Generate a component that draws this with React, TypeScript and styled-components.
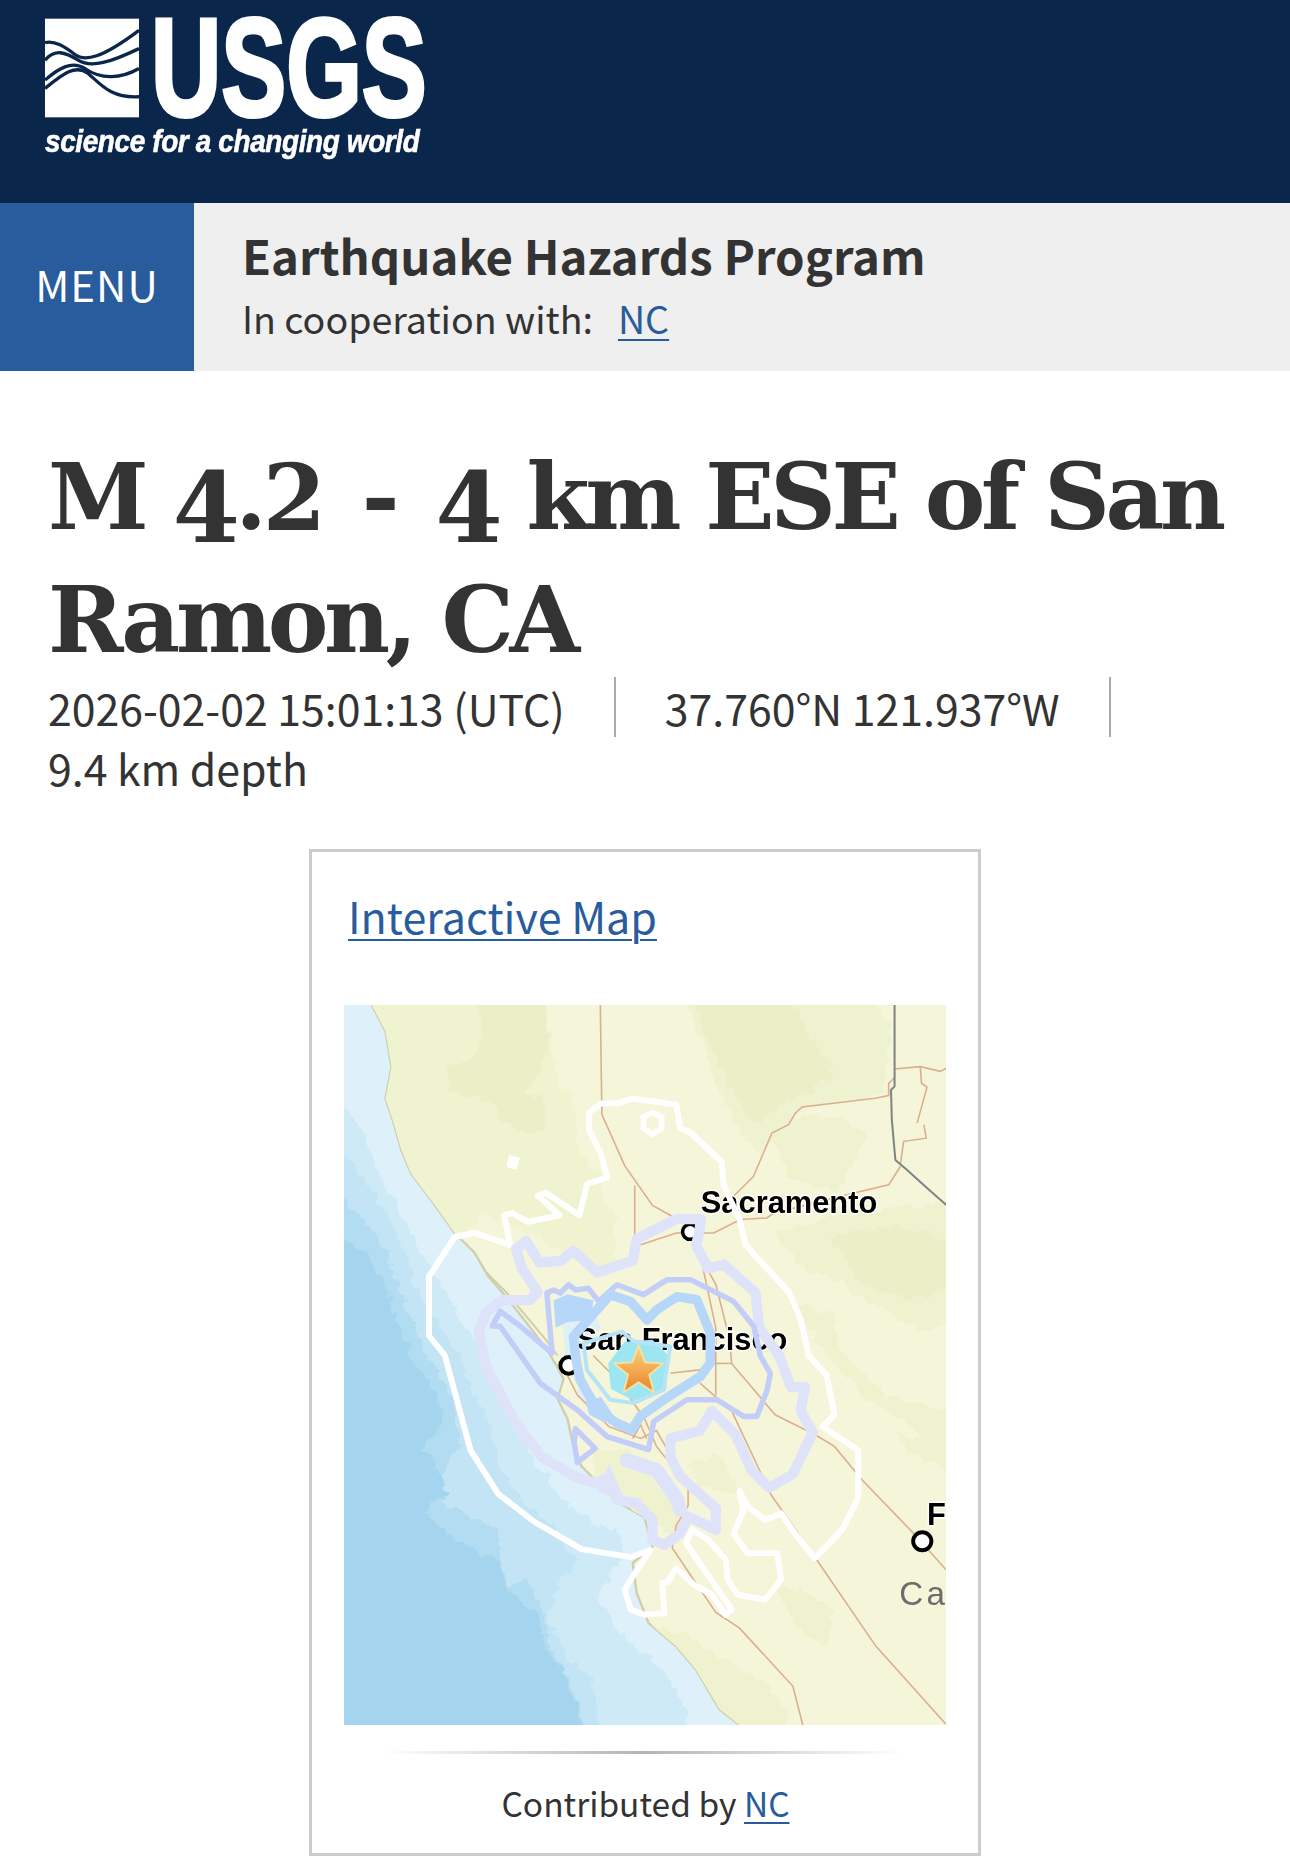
import React from "react";
import styled, { createGlobalStyle } from "styled-components";

const Global = createGlobalStyle`
  html, body { margin: 0; padding: 0; background: #fff; }
  body { font-family: "Noto Sans CJK SC", "Noto Sans", sans-serif; color: #333; }
`;
const Page = styled.div`width: 1290px; height: 1868px; overflow: hidden;`;
const TopBar = styled.header`height: 203px; background: #0b264b; padding: 18px 0 0 45px; box-sizing: border-box;`;
const Logo = styled.a`display: block; width: 380px; color: #fff;`;
const LogoRow = styled.div`display: flex; gap: 12px; height: 100px; align-items: center;`;
const Wordmark = styled.span`
  display: block; width: 270px; height: 100px; line-height: 100px; white-space: nowrap;
  font: 700 139px/100px "Liberation Sans", sans-serif;
  -webkit-text-stroke: 4px #fff;
  transform: scaleX(0.70); transform-origin: left center;
`;
const Tagline = styled.div`
  margin-top: 6px; white-space: nowrap; font: italic 700 31px/36px "Liberation Sans", sans-serif;
  -webkit-text-stroke: 0.6px #fff;
  transform: scaleX(0.90); transform-origin: left center; letter-spacing: -0.4px;
`;
const ProgramBar = styled.nav`display: flex; height: 168px; background: #efeff0;`;
const MenuButton = styled.div`
  width: 194px; background: #285c9c; color: #fff; display: flex; align-items: center; justify-content: center;
  box-sizing: border-box; padding-bottom: 8px;
  font-size: 42px; font-weight: 400; letter-spacing: 1px;
`;
const ProgramInfo = styled.div`padding: 22px 0 0 48px;`;
const ProgramName = styled.div`font-size: 47.3px; line-height: 60px; font-weight: 700; color: #333;`;
const Cooperation = styled.div`font-size: 37.6px; line-height: 60px; margin-top: 3px; font-weight: 400; display: flex; gap: 25px;`;
const Link = styled.a`color: #285c9c; text-decoration: underline; text-decoration-thickness: 2px; text-underline-offset: 5px;`;
const Main = styled.main`padding: 0 48px;`;
const Title = styled.h1`
  margin: 0; padding-top: 65px; width: 1194px;
  font: 700 91px/123px "DejaVu Serif", serif; letter-spacing: -4.4px; word-spacing: 1px; color: #333;
`;
const Old = styled.span<{ $drop?: boolean }>`
  font-size: ${(p) => (p.$drop ? "1.06em" : "1em")}; line-height: 0; position: relative;
  top: ${(p) => (p.$drop ? "0.13em" : "0.01em")};
`;
const Dash = styled.span`margin: 0 12px;`;
const Meta = styled.ul`
  list-style: none; margin: -5px 0 0; padding: 0; display: flex; flex-wrap: wrap; font-size: 42.8px; line-height: 60px; font-weight: 400;
`;
const MetaItem = styled.li<{ $sep?: boolean }>`
  ${(p) => (p.$sep ? "border-right: 2px solid #aaa; padding-right: 49px; margin-right: 49px;" : "")}
  white-space: nowrap;
`;
const Card = styled.section`
  box-sizing: border-box; width: 672px; height: 1007px; margin: 52px auto 0; border: 3px solid #ccc;
  padding: 33px 31px 0 32px; display: flex; flex-direction: column; background: #fff;
`;
const CardLink = styled(Link)`font-size: 43px; line-height: 60px; font-weight: 400; margin-left: 4px; align-self: flex-start;`;
const MapFrame = styled.svg`display: block; width: 602px; height: 720px; margin-top: 60px;`;
const Divider = styled.hr`
  border: 0; height: 3px; margin: 26px 40px 0; width: 520px;
  background: linear-gradient(90deg, rgba(180,180,180,0), rgba(180,180,180,1) 50%, rgba(180,180,180,0));
`;
const Credit = styled.div`text-align: center; font-size: 33.5px; line-height: 50px; margin-top: 24px; font-weight: 400;`;
const MapLabel = styled.text`
  font: 700 78px "Liberation Sans", sans-serif; fill: #000;
  paint-order: stroke; stroke: #fff; stroke-width: 7px; stroke-linejoin: round;
`;
const RegionLabel = styled.text`font: 400 84px "Liberation Sans", sans-serif; fill: #6c6c6c; letter-spacing: 8px;`;

const land = "70,-20 80,13 115,80 130,170 115,250 135,310 155,380 180,440 240,520 290,590 340,640 375,700 410,740 450,790 520,880 550,930 565,960 550,1010 575,1060 590,1130 610,1180 650,1220 700,1270 770,1310 790,1385 740,1425 750,1501 780,1577 850,1636 900,1695 960,1796 1010,1835 1050,1900 1600,1900 1600,-20";
const bands = [
  { c: "#cfeaf7", p: "-40,210 60,330 100,450 150,520 200,640 260,720 300,800 350,880 400,1000 440,1070 480,1150 520,1200 560,1270 640,1320 700,1350 720,1400 680,1460 650,1520 690,1570 720,1620 780,1660 820,1700 860,1760 900,1900 -40,1900" },
  { c: "#c2e4f5", p: "-40,330 50,430 110,530 170,650 190,720 250,820 310,920 340,1000 380,1080 400,1180 470,1280 540,1330 600,1420 560,1470 520,1560 570,1660 640,1720 640,1780 670,1900 -40,1900" },
  { c: "#b2dcf1", p: "-40,440 60,560 120,640 160,760 220,900 280,1000 310,1100 260,1200 240,1250 290,1290 400,1340 410,1440 430,1490 470,1460 510,1540 530,1640 590,1740 640,1900 -40,1900" },
  { c: "#a5d5ee", p: "-40,560 60,640 100,700 140,790 180,900 240,990 260,1060 200,1140 240,1170 270,1250 210,1290 300,1370 400,1420 430,1500 500,1560 520,1640 570,1710 640,1900 -40,1900" },
];
const hills: { c: string; p: string }[] = [
  { c: "#f0f3d0", p: "60,-20 523,-20 540,170 590,253 607,396 657,438 666,506 700,548 700,666 640,675 560,640 472,582 370,540 295,620 200,520 100,300" },
  { c: "#ebefc8", p: "330,-20 520,-20 530,120 500,190 470,230 520,260 520,330 470,340 410,300 370,260 280,230 270,170 340,140 360,70" },
  { c: "#eff2cf", p: "868,-20 1330,-20 1390,60 1375,240 1170,270 1120,330 1060,390 1010,330 975,270 940,190 911,101" },
  { c: "#ebefc8", p: "890,-20 1130,-20 1190,90 1250,190 1170,240 1080,290 1040,320 1000,240 960,170 920,90" },
  { c: "#eff2cf", p: "1096,354 1170,290 1270,300 1330,340 1298,413 1256,489 1130,447" },
  { c: "#eff2cf", p: "1096,590 1280,540 1580,506 1580,800 1480,840 1380,790 1290,740 1265,716 1170,680" },
  { c: "#ebefc8", p: "1240,600 1400,570 1580,620 1580,720 1440,760 1320,720" },
  { c: "#eff2cf", p: "1130,760 1240,790 1270,890 1380,1000 1580,1050 1580,1200 1440,1080 1320,1000 1240,910" },
  { c: "#eff2cf", p: "630,1140 720,1135 770,1180 860,1300 850,1370 780,1320 700,1270 650,1220" },
  { c: "#eff2cf", p: "880,1175 960,1150 1010,1240 950,1250 900,1220" },
  { c: "#eff2cf", p: "760,1570 860,1600 960,1660 1080,1730 1130,1800 1100,1880 1000,1880 940,1790 880,1695 820,1636" },
  { c: "#eff2cf", p: "1100,1485 1170,1490 1250,1550 1230,1640 1180,1610 1130,1540" },
  { c: "#eff2cf", p: "1400,1100 1580,1120 1580,1200 1460,1160" },
];
const counties = [
  "658,13 662,290 720,420 790,520 835,545 885,575",
  "745,470 745,600",
  "995,497 1045,447 1092,337 1134,316 1151,287 1168,271 1353,249 1387,242 1387,211 1401,198",
  "760,620 850,590 945,590 1012,556 1079,552 1096,540 1265,497 1387,468 1417,421",
  "1402,175 1467,169 1518,181 1532,173",
  "1467,169 1470,211 1484,221 1459,312",
  "1476,316 1482,350 1425,358 1417,413",
  "905,640 950,720 985,860 990,920 1100,1050 1200,1100 1250,1130 1320,1215 1450,1350 1532,1442",
  "905,620 950,830 950,1000",
  "950,920 990,920",
  "910,970 990,1040 1090,1253 1205,1417 1355,1636 1532,1833",
  "570,940 600,1000 680,1080 760,1110 800,1090 880,1230 880,1280 850,1330 840,1387 950,1550 1010,1590 1145,1737 1170,1835",
  "640,900 700,960 770,1060 800,1130 880,1230",
  "835,945 920,935",
  "740,1110 760,1075 775,1110",
];
const white = "735,1410 610,1390 490,1320 400,1250 330,1140 265,900 225,850 225,700 290,600 340,590 430,620 415,545 435,540 475,562 555,545 500,495 520,488 605,545 625,465 675,450 660,390 630,330 630,285 660,262 700,262 740,250 850,265 860,325 885,335 965,410 970,470 1010,555 1025,620 1135,740 1165,810 1185,900 1230,950 1250,1050 1220,1080 1310,1140 1310,1260 1270,1340 1200,1413 1150,1350 1115,1299 1075,1316 1030,1282 1010,1244 1020,1291 995,1350 1030,1400 1105,1400 1115,1468 1075,1518 1005,1505 980,1468 975,1417 930,1366 890,1341 875,1375 990,1543 975,1556 940,1505 895,1480 850,1438 830,1472 815,1476 820,1552 770,1556 735,1543 720,1493 740,1459 785,1392";
const lavender = "350,840 370,790 410,760 480,760 500,740 460,680 445,630 470,610 505,665 560,660 590,635 650,690 740,660 750,605 850,555 912,555 908,590 900,620 930,680 970,670 1050,740 1060,830 1110,900 1140,980 1175,980 1165,1040 1195,1095 1145,1200 1085,1235 1040,1190 1000,1100 940,1040 910,1090 835,1110 835,1156 860,1206 950,1286 950,1341 880,1307 860,1350 820,1379 790,1366 790,1316 750,1274 700,1265 680,1206 650,1223 600,1210 510,1156 440,1063 370,930";
const periwinkle = "405,788 456,826 506,869 536,894 523,742 540,734 557,742 578,721 595,734 628,730 654,763 700,721 767,746 827,708 886,708 995,763 1046,826 1063,902 1088,945 1080,987 1054,1054 1020,1054 953,1012 877,1012 793,1067 780,1138 675,1105 599,1037 506,970 405,826 385,825";
const midBlue = "590,852 683,746 734,763 776,810 801,784 852,751 902,759 936,843 936,919 911,953 818,1012 759,1054 738,1088 700,1071 650,1037 607,961 595,902";
const cyan = "616,869 713,839 742,864 835,877 818,987 742,1020 683,1012 624,936";
const star = "755,875 771,917 817,920 782,949 793,993 755,968 717,993 728,949 693,920 739,917";

function EarthquakeMap() {
  return (
    <MapFrame viewBox="10 13 1522 1822" preserveAspectRatio="none">
      <defs>
        <linearGradient id="starFill" x1="0" y1="0" x2="0" y2="1">
          <stop offset="0" stopColor="#fbd37c" />
          <stop offset="1" stopColor="#e8842b" />
        </linearGradient>
        <clipPath id="landClip"><polygon points={land} /></clipPath>
        <filter id="rough" filterUnits="userSpaceOnUse" x="-100" y="-100" width="1800" height="2100">
          <feTurbulence type="fractalNoise" baseFrequency="0.035" numOctaves="3" seed="4" result="n" />
          <feDisplacementMap in="SourceGraphic" in2="n" scale="34" xChannelSelector="R" yChannelSelector="G" />
        </filter>
        <filter id="soft" filterUnits="userSpaceOnUse" x="-100" y="-100" width="1800" height="2100">
          <feGaussianBlur stdDeviation="1.4" />
        </filter>
      </defs>
      <g filter="url(#soft)">
        <rect x="-40" y="-40" width="1640" height="1960" fill="#def1fb" />
        <g filter="url(#rough)">
          {bands.map((b) => <polygon key={b.c} points={b.p} fill={b.c} />)}
        </g>
        <polygon points={land} fill="#f5f6d9" stroke="#cfcfae" strokeWidth="6" />
        <g clipPath="url(#landClip)">
          <g filter="url(#rough)">
            {hills.map((h, i) => <polygon key={i} points={h.p} fill={h.c} />)}
          </g>
        </g>
        <polygon points="560,800 640,780 660,830 610,900 600,1000 640,1030 590,960 570,900" fill="#dff0f6" />
        <polyline points="370,690 420,740 520,860 550,900" fill="none" stroke="#cfcfae" strokeWidth="5" />
        {counties.map((c, i) => <polyline key={i} points={c} fill="none" stroke="#dcae90" strokeWidth="4" />)}
        <polyline points="1402,0 1402,219 1393,228 1395,303 1404,405 1433,430 1484,476 1545,530" fill="none" stroke="#7b8383" strokeWidth="5" />

        <circle cx="885" cy="587" r="19" fill="#fff" stroke="#000" strokeWidth="9" />
        <circle cx="578" cy="925" r="21" fill="#fff" stroke="#000" strokeWidth="10" />
        <circle cx="1472" cy="1370" r="23" fill="#fff" stroke="#000" strokeWidth="10" />
        <MapLabel x="912" y="540">Sacramento</MapLabel>
        <MapLabel x="598" y="885">San Francisco</MapLabel>
        <MapLabel x="1484" y="1328">F</MapLabel>
        <RegionLabel x="1414" y="1531">Ca</RegionLabel>

        <polygon points="755,1020 685,985 678,920 720,865 790,860 830,900 825,985" fill="#9ce6f2" />
        <polygon points={white} fill="none" stroke="#fff" strokeWidth="15" strokeLinejoin="round" />
        <polygon points="790,285 813,297 813,325 790,340 767,325 767,297" fill="none" stroke="#fff" strokeWidth="14" />
        <polygon points="428,392 455,400 445,430 420,423" fill="#fff" />
        <polygon points={lavender} fill="none" stroke="#dfe3fa" strokeWidth="26" strokeLinejoin="round" />
        <polyline points="725,1165 800,1190 850,1260 860,1290" fill="none" stroke="#dfe3fa" strokeWidth="36" strokeLinejoin="round" strokeLinecap="round" />
        <polygon points="680,1175 720,1265 650,1245" fill="#dfe3fa" />
        <polygon points={periwinkle} fill="none" stroke="#c3cef8" strokeWidth="14" strokeLinejoin="round" />
        <polygon points="595,1085 645,1135 600,1170 592,1120" fill="none" stroke="#c3cef8" strokeWidth="14" strokeLinejoin="round" />
        <polygon points="540,760 575,745 640,760 635,810 575,815 545,830" fill="#b6d6fa" />
        <polygon points={midBlue} fill="none" stroke="#b6d6fa" strokeWidth="24" strokeLinejoin="round" />
        <polygon points="620,1015 660,1005 690,1050 670,1070 630,1050" fill="#b6d6fa" />
        <polygon points={cyan} fill="none" stroke="#b6e3f6" strokeWidth="10" strokeLinejoin="round" />
        <polygon points={star} fill="url(#starFill)" stroke="#f3e1a2" strokeWidth="5" strokeLinejoin="round" />
      </g>
    </MapFrame>
  );
}

export default function App() {
  return (
    <Page>
      <Global />
      <TopBar>
        <Logo>
          <LogoRow>
            <svg width="94" height="100" viewBox="0 0 283 297" aria-hidden="true">
              <rect width="283" height="297" fill="#fff" />
              <g fill="none" stroke="#0b264b" strokeWidth="10">
                <path d="M0 72 C30 65 60 85 90 108 C120 130 170 120 283 35" />
                <path d="M0 125 C30 90 60 100 100 125 C140 150 200 130 283 90" />
                <path d="M0 185 C40 150 80 125 120 150 C170 185 230 180 283 150" />
                <path d="M0 210 C50 170 90 135 130 165 C170 200 200 240 283 235" />
              </g>
            </svg>
            <Wordmark>USGS</Wordmark>
          </LogoRow>
          <Tagline>science for a changing world</Tagline>
        </Logo>
      </TopBar>
      <ProgramBar>
        <MenuButton>MENU</MenuButton>
        <ProgramInfo>
          <ProgramName>Earthquake Hazards Program</ProgramName>
          <Cooperation>
            <span>In cooperation with:</span>
            <Link>NC</Link>
          </Cooperation>
        </ProgramInfo>
      </ProgramBar>
      <Main>
        <Title>
          M <Old $drop>4</Old>.<Old>2</Old> <Dash>-</Dash> <Old $drop>4</Old> km ESE of San Ramon, CA
        </Title>
        <Meta>
          <MetaItem $sep>2026-02-02 15:01:13 (UTC)</MetaItem>
          <MetaItem $sep>37.760°N 121.937°W</MetaItem>
          <MetaItem>9.4 km depth</MetaItem>
        </Meta>
        <Card>
          <CardLink>Interactive Map</CardLink>
          <EarthquakeMap />
          <Divider />
          <Credit>
            Contributed by <Link>NC</Link>
          </Credit>
        </Card>
      </Main>
    </Page>
  );
}
